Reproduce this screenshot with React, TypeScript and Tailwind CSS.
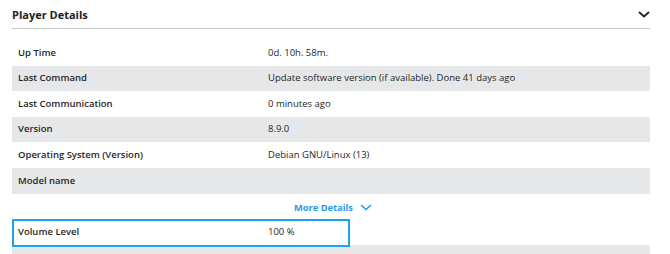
import React from "react";

const rows: [string, string][] = [
  ["Up Time", "0d. 10h. 58m."],
  ["Last Command", "Update software version (if available). Done 41 days ago"],
  ["Last Communication", "0 minutes ago"],
  ["Version", "8.9.0"],
  ["Operating System (Version)", "Debian GNU/Linux (13)"],
  ["Model name", ""],
];

function Row({ label, value, gray }: { label: string; value: string; gray: boolean }) {
  return (
    <div className={`flex items-center h-[25.6px] ${gray ? "bg-[#e6e7e9]" : "bg-white"}`}>
      <div className="w-[256px] pl-[6px] font-semibold">{label}</div>
      <div>{value}</div>
    </div>
  );
}

export default function App() {
  return (
    <div
      className="w-[670px] h-[254px] overflow-hidden bg-white pl-[12px] pr-[20px] text-[#262626] text-[9.5px]"
      style={{ fontFamily: '"Open Sans", sans-serif' }}
    >
      <div className="flex items-center justify-between h-[29px] border-b border-[#c8c8c8] pt-[2px]">
        <div className="text-[11px] font-bold text-[#222]">Player Details</div>
        <svg width="12" height="7" viewBox="0 0 12 7" className="mb-[2px]">
          <path d="M1 1 L6 5.5 L11 1" fill="none" stroke="#222" strokeWidth="1.8" />
        </svg>
      </div>
      <div className="mt-[11px]">
        {rows.map(([l, v], i) => (
          <Row key={l} label={l} value={v} gray={i % 2 === 1} />
        ))}
      </div>
      <div className="flex justify-center items-center h-[26px] pt-[2px] gap-[7px] text-[#1e9be9] font-bold text-[9.3px] pl-[4px]">
        <span>More Details</span>
        <svg width="12" height="7" viewBox="0 0 12 7">
          <path d="M1 1 L6 5.5 L11 1" fill="none" stroke="#1e9be9" strokeWidth="1.5" />
        </svg>
      </div>
      <div className="relative">
        <Row label="Volume Level" value="100 %" gray={false} />
        <div className="absolute left-0 top-[-1px] w-[338px] h-[28px] border-2 border-[#1aa3f0]" />
        <Row label="" value="" gray={true} />
      </div>
    </div>
  );
}
